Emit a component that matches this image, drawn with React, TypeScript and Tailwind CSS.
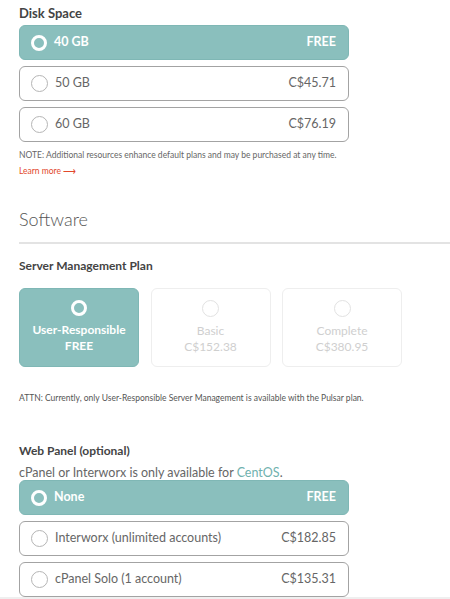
import React from 'react';

type Opt = { label: string; price: string; selected?: boolean };

const disk: Opt[] = [
  { label: '40 GB', price: 'FREE', selected: true },
  { label: '50 GB', price: 'C$45.71' },
  { label: '60 GB', price: 'C$76.19' },
];

const panels: Opt[] = [
  { label: 'None', price: 'FREE', selected: true },
  { label: 'Interworx (unlimited accounts)', price: 'C$182.85' },
  { label: 'cPanel Solo (1 account)', price: 'C$135.31' },
];

const plans = [
  { name: 'User-Responsible', price: 'FREE', selected: true },
  { name: 'Basic', price: 'C$152.38' },
  { name: 'Complete', price: 'C$380.95' },
];

const Radio = ({ on, faded }: { on?: boolean; faded?: boolean }) =>
  on ? (
    <span className="block w-[16px] h-[16px] rounded-full border-[3px] border-white shrink-0" />
  ) : (
    <span
      className={`block w-[17px] h-[17px] rounded-full border shrink-0 ${
        faded ? 'border-[#e2e2e2]' : 'border-[#b5b5b5]'
      }`}
    />
  );

const OptionRow = ({ opt }: { opt: Opt }) => (
  <div
    className={`flex items-center h-[35px] w-[330px] rounded-[6px] border pl-[11px] pr-[12px] ${
      opt.selected
        ? 'bg-[#8abfbd] border-[#7fb7b5] text-white font-bold'
        : 'bg-white border-[#a3a3a3] text-[#666]'
    }`}
  >
    <Radio on={opt.selected} />
    <span className="ml-[7px] text-[12.5px]">{opt.label}</span>
    <span className="ml-auto text-[12.5px]">{opt.price}</span>
  </div>
);

export default function App() {
  return (
    <div className="w-[450px] h-[599px] overflow-hidden bg-white font-['Lato','Open_Sans',sans-serif] relative">
      <div className="pl-[19px]">
        {/* Disk Space */}
        <div className="pt-[5px] text-[13px] font-bold text-[#444] leading-[16px]">Disk Space</div>
        <div className="mt-[4px] flex flex-col gap-[6px]">
          {disk.map(o => (
            <OptionRow key={o.label} opt={o} />
          ))}
        </div>
        <p className="mt-[7px] text-[8.5px] text-[#666] leading-[12px]">
          NOTE: Additional resources enhance default plans and may be purchased at any time.
        </p>
        <a className="block mt-[4px] text-[8.5px] text-[#e2482c] leading-[12px]">Learn more ⟶</a>
      </div>

      {/* Software */}
      <div className="mt-[31px] pl-[19px]">
        <h2 className="text-[18px] font-light text-[#555] leading-[22px]">Software</h2>
        <div className="mt-[12px] h-[2px] bg-[#e3e3e3]" />
      </div>

      <div className="pl-[19px]">
        <div className="mt-[14px] text-[12px] font-bold text-[#444] leading-[15px]">Server Management Plan</div>
        <div className="mt-[15px] flex gap-[11.5px]">
          {plans.map(p => (
            <div
              key={p.name}
              className={`w-[120px] h-[79px] rounded-[6px] border flex flex-col items-center pt-[11px] ${
                p.selected
                  ? 'bg-[#8abfbd] border-[#7fb7b5] text-white font-bold'
                  : 'bg-white border-[#eeeeee] text-[#cfcfcf]'
              }`}
            >
              <Radio on={p.selected} faded />
              <span className="mt-[6px] text-[12px] leading-[16px]">{p.name}</span>
              <span className="text-[12px] leading-[16px]">{p.price}</span>
            </div>
          ))}
        </div>
        <p className="mt-[25px] text-[8.5px] text-[#555] leading-[12px]">
          ATTN: Currently, only User-Responsible Server Management is available with the Pulsar plan.
        </p>

        {/* Web Panel */}
        <div className="mt-[39px] text-[12px] font-bold text-[#444] leading-[15px]">Web Panel (optional)</div>
        <p className="mt-[7px] text-[12.5px] text-[#666] leading-[16px]">
          cPanel or Interworx is only available for <span className="text-[#6fb1ae]">CentOS</span>.
        </p>
        <div className="-mt-[1px] flex flex-col gap-[6px]">
          {panels.map(o => (
            <OptionRow key={o.label} opt={o} />
          ))}
        </div>
      </div>
      <div className="absolute left-0 right-0 bottom-0 h-[2px] bg-[#efefef]" />
    </div>
  );
}
